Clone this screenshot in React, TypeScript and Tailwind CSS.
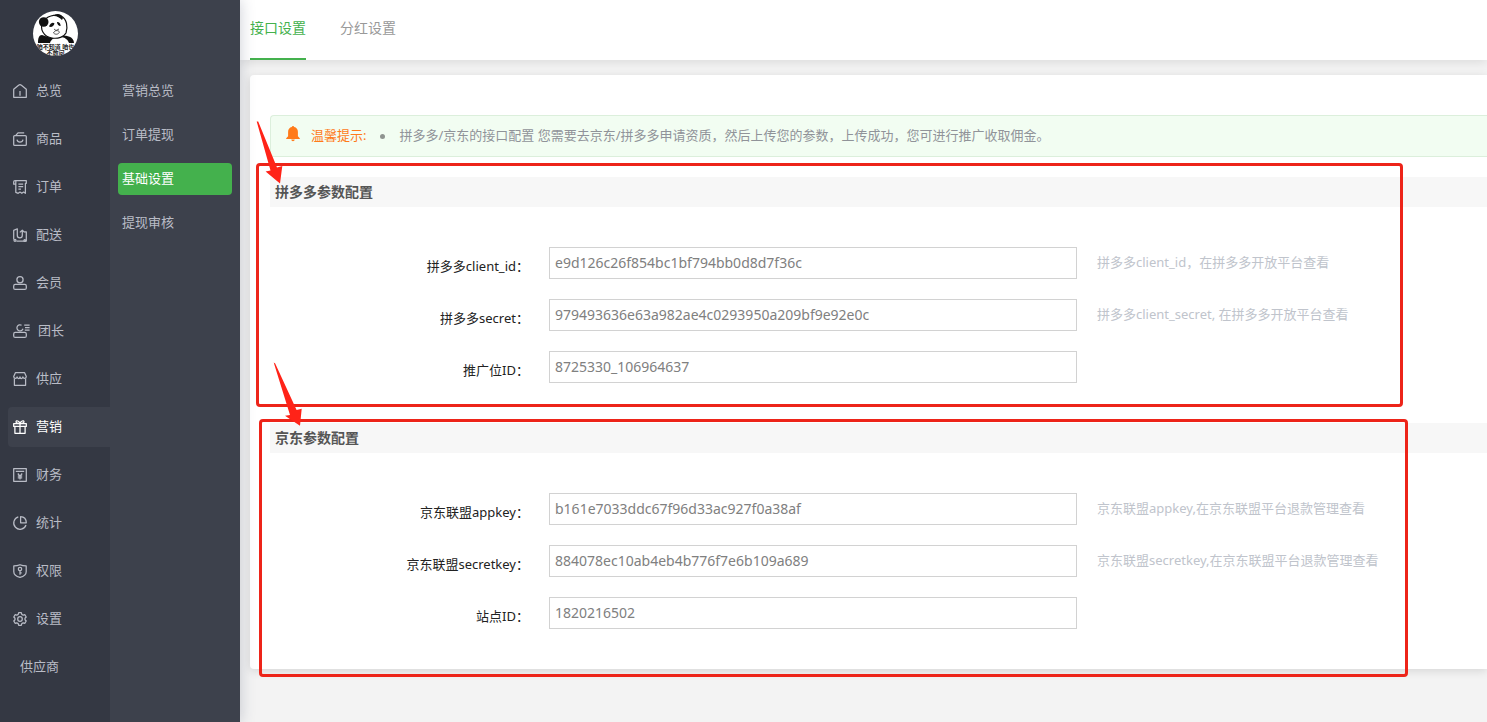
import { ReactNode, useState } from "react"
import clsx from "clsx"

const navIcons: Record<string, ReactNode> = {
  home: (
    <>
      <path d="M.7 5.2 5.6 1.2Q7 .1 8.4 1.2L13.3 5.2V13.3H.7Z" />
      <path d="M7 7v4.8" />
    </>
  ),
  goods: (
    <>
      <rect x=".7" y="3.6" width="12.6" height="9.8" rx="1" />
      <path d="M2.8 3.4 5 .8h6.2M4 7.6c.6 3.2 5.4 3.2 6 0" />
    </>
  ),
  order: (
    <>
      <path d="M3.2 4.2H.7V2Q.7.7 2 .7h11.3v2.6h-.9v10l-1.8-1.2-1.8 1.2-1.8-1.2-1.8 1.2-2.4-.9V2Q3.2.9 2.2.8" />
      <path d="M5.4 4.2h4.8M5.4 6.6h4.8M5.4 9h2.6" />
    </>
  ),
  delivery: (
    <>
      <path d="M.7 11.5V2.4L4.3.8v6.4c0 3.4 5 3.4 5 0V2.6M6.8 4.4l2.5-2.2 2.3 2.2M11.4 3.8h1.9v9.3H3.4" />
      <circle cx="2" cy="12.3" r="1" />
      <circle cx="11.8" cy="12.5" r=".9" />
    </>
  ),
  member: (
    <>
      <circle cx="7" cy="3.8" r="3.1" />
      <rect x=".7" y="8.4" width="12.6" height="5" rx="1.5" />
    </>
  ),
  leader: (
    <>
      <path d="M8.6 1.2A3.1 3.1 0 1 0 10 4.8M11.2 1h5.4M12 3.5h4.6M11.8 6h4.8" />
      <rect x=".7" y="8.4" width="12.6" height="5" rx="1.5" />
    </>
  ),
  shop: (
    <>
      <path d="M2.4.7h9.2l1.7 3.9c0 2.3-3 2.5-3.4.3-.5 2.2-2.6 2.2-2.9 0-.3 2.2-2.4 2.2-2.9 0C3.7 7.1.7 6.9.7 4.6Z" />
      <path d="M1.4 6.6v6.7h11.2V6.6" />
    </>
  ),
  gift: (
    <>
      <path d="M.7 3.6h12.6v2.8H.7ZM1.9 6.4v6.9h10.2V6.4M7 3.6v9.7" />
      <path d="M7 3.5C6.2 1 3.2-.1 3 1.7c0 1.2 2 1.9 4 1.8 2 .1 4-.6 4-1.8C10.8-.1 7.8 1 7 3.5Z" />
    </>
  ),
  finance: (
    <>
      <path d="M.7.7h12.6v12.6H.7ZM2.8 3.4h8.4" />
      <path d="m4.8 5.5 2.2 2.6 2.2-2.6M4.8 8.2h4.4M4.8 9.9h4.4M7 8.2v3.4" />
    </>
  ),
  stats: (
    <>
      <path d="M5.3.9A6.3 6.3 0 1 0 13 9" />
      <path d="M7.6.7v6.1h5.7C13.2 3 10.8.8 7.6.7Z" />
    </>
  ),
  shield: (
    <>
      <path d="M7 .7c2 .9 4.1 1.2 6.2 1.2v5.9c0 2.6-2.3 4.6-6.2 5.6C3.1 12.4.8 10.4.8 7.8V1.9C2.9 1.9 5 1.600 7 .7Z" />
      <circle cx="7" cy="5" r="1.7" />
      <path d="M7 6.7v4M7 8.9h1.7" />
    </>
  ),
  gear: (
    <>
      <path d="M5.7.7h2.6l.5 1.7 1.4.8 1.7-.5 1.3 2.3-1.2 1.2v1.6l1.2 1.2-1.3 2.3-1.7-.5-1.4.8-.5 1.7H5.7l-.5-1.7-1.4-.8-1.7.5L.8 9 2 7.8V6.2L.8 5l1.3-2.3 1.7.5 1.4-.8Z" />
      <circle cx="7" cy="7" r="2.3" />
    </>
  ),
}

const navItems = [
  { label: "总览", icon: "home" },
  { label: "商品", icon: "goods" },
  { label: "订单", icon: "order" },
  { label: "配送", icon: "delivery" },
  { label: "会员", icon: "member" },
  { label: "团长", icon: "leader" },
  { label: "供应", icon: "shop" },
  { label: "营销", icon: "gift" },
  { label: "财务", icon: "finance" },
  { label: "统计", icon: "stats" },
  { label: "权限", icon: "shield" },
  { label: "设置", icon: "gear" },
  { label: "供应商", icon: "" },
]

const subItems = ["营销总览", "订单提现", "基础设置", "提现审核"]
const tabs = ["接口设置", "分红设置"]

const pddFields = [
  { id: "pdd_client_id", label: "拼多多client_id：", value: "e9d126c26f854bc1bf794bb0d8d7f36c", hint: "拼多多client_id，在拼多多开放平台查看" },
  { id: "pdd_secret", label: "拼多多secret：", value: "979493636e63a982ae4c0293950a209bf9e92e0c", hint: "拼多多client_secret, 在拼多多开放平台查看" },
  { id: "pdd_pid", label: "推广位ID：", value: "8725330_106964637", hint: "" },
]

const jdFields = [
  { id: "jd_appkey", label: "京东联盟appkey：", value: "b161e7033ddc67f96d33ac927f0a38af", hint: "京东联盟appkey,在京东联盟平台退款管理查看" },
  { id: "jd_secretkey", label: "京东联盟secretkey：", value: "884078ec10ab4eb4b776f7e6b109a689", hint: "京东联盟secretkey,在京东联盟平台退款管理查看" },
  { id: "jd_site", label: "站点ID：", value: "1820216502", hint: "" },
]

function NavIcon({ name }: { name: string }) {
  const wide = name === "leader"
  return (
    <svg
      viewBox={wide ? "0 0 16 14" : "0 0 14 14"}
      className={clsx("h-3.5 shrink-0 overflow-visible", wide ? "w-4" : "w-3.5")}
      fill="none"
      stroke="currentColor"
      strokeWidth="1.25"
      strokeLinejoin="round"
      aria-hidden="true"
    >
      {navIcons[name]}
    </svg>
  )
}

function Avatar() {
  return (
    <svg viewBox="0 0 45 45" className="mx-auto size-[45px] rounded-full bg-white" role="img" aria-label="logo">
      <path d="M5 32c0-5 1-8 4-8 4 1 8 3 13 3s8-3 12-2c5 1 7 4 7 7Z" fill="#111" />
      <path d="M17 32c1-4 5-6 10-6s8 3 9 6Z" fill="#fff" />
      <path
        d="M10 11c3-6 12-8 18-6 6 3 7 11 5 17-2 4-8 6-14 5C11 26 6 18 10 11Z"
        fill="#fff"
        stroke="#111"
        strokeWidth="1.2"
      />
      <circle cx="10.7" cy="11" r="4.8" fill="#111" />
      <path d="M21 5c1-3 8-3 9 2l-1 2c-2-2-5-4-8-4Z" fill="#111" />
      <path d="M16 15.500c1-3 4-5 5.500-3-1 3-3 4-5.500 3ZM24 11c2-.5 4 2 3.500 4-2 0-3.500-2-3.500-4Z" fill="#111" />
      <path d="m21 18 2 1.500 3-1.500M20.500 22c1-3 5-3 6-1-1 2.500-4 3-6 1" fill="none" stroke="#333" strokeWidth=".8" />
      <text x="22.5" y="37.5" textAnchor="middle" fontSize="6" fontWeight="700" fill="#222">
        咱不知道 咱也
      </text>
      <text x="22.5" y="43.5" textAnchor="middle" fontSize="6" fontWeight="700" fill="#222">
        不敢问
      </text>
    </svg>
  )
}

type Field = { id: string; label: string; value: string; hint: string }

function ConfigSection({ title, fields, children }: { title: string; fields: Field[]; children: ReactNode }) {
  return (
    <section className="relative mt-5">
      <h2 className="h-[30px] bg-[#f7f7f7] pl-[5px] text-sm leading-[30px] font-bold text-[#555]">{title}</h2>
      <div className="flex flex-col gap-5 pt-10 pb-5">
        {fields.map((field) => (
          <div key={field.id} className="flex">
            <label htmlFor={field.id} className="w-[259px] shrink-0 pt-[9px] text-right text-[13px] leading-5 text-[#222]">
              {field.label}
            </label>
            <input
              id={field.id}
              type="text"
              defaultValue={field.value}
              className="mx-5 h-8 min-w-0 flex-1 border border-[#d2d2d2] bg-white px-[5px] pb-0.5 text-sm text-[#808080] outline-none"
            />
            <p className="w-[390px] shrink-0 pt-[5px] text-[13px] leading-5 text-[#c0c4cc]">{field.hint}</p>
          </div>
        ))}
      </div>
      {children}
    </section>
  )
}

export default function App() {
  const [tab, setTab] = useState("接口设置")

  return (
    <div className="flex min-h-screen bg-[#f3f3f3] font-['Noto_Sans','Noto_Sans_CJK_SC',sans-serif]">
      <div className="z-10 flex shrink-0 shadow-[0_0_14px_rgba(50,60,90,0.25)]">
        <aside className="w-[110px] bg-[#343843] pt-[11px]">
          <Avatar />
          <nav className="mt-[15px] flex flex-col gap-2 pl-2">
            {navItems.map((item) => (
              <a
                key={item.label}
                href="#"
                className={clsx(
                  "flex h-10 items-center gap-[9px] rounded-l text-[13px]",
                  item.icon ? "pl-[5px]" : "pl-3",
                  item.label === "营销" ? "bg-[#3d414c] text-white" : "text-[#b9bcc6]"
                )}
              >
                {item.icon && <NavIcon name={item.icon} />}
                {item.label}
              </a>
            ))}
          </nav>
        </aside>
        <nav className="flex w-[130px] flex-col gap-3 bg-[#3d414c] px-2 pt-[75px]">
          {subItems.map((label) => (
            <a
              key={label}
              href="#"
              className={clsx(
                "flex h-8 items-center rounded px-1 text-[13px]",
                label === "基础设置" ? "bg-[#44b14d] text-white" : "text-[#b9bcc6]"
              )}
            >
              {label}
            </a>
          ))}
        </nav>
      </div>

      <main className="min-w-0 flex-1 overflow-hidden">
        <header className="flex h-[60px] gap-[34px] bg-white pl-2.5 shadow-[0_2px_10px_rgba(0,0,0,0.1)]">
          {tabs.map((label) => (
            <button
              key={label}
              type="button"
              onClick={() => setTab(label)}
              className={clsx(
                "border-b-2 pb-0.5 text-sm",
                tab === label ? "border-[#44b14d] text-[#44b14d]" : "border-transparent text-[#999]"
              )}
            >
              {label}
            </button>
          ))}
        </header>

        <div className="mt-[15px] ml-2.5 rounded-l-sm bg-white pt-10 pb-5 pl-5 shadow-[0_2px_10px_rgba(0,0,0,0.12)]">
          <div className="flex h-[42px] items-center rounded-l border border-r-0 border-[#dcefdc] bg-[#f2fdf2] pl-[15px] text-[13px]">
            <svg viewBox="0 0 14 16" className="mb-1 h-4 w-3.5" fill="#ff7a1a" aria-hidden="true">
              <path d="M7 0c.7 0 1.1.4 1.2 1 2.3.5 3.7 2.3 3.7 4.7v4.6l1.9 1.9v.8H.2v-.8l1.9-1.900V5.7C2.1 3.3 3.5 1.5 5.8 1 5.9.4 6.3 0 7 0ZM5.3 13.6h3.4c-.1 1.1-.8 1.7-1.7 1.7s-1.6-.6-1.7-1.7Z" />
            </svg>
            <span className="ml-[11px] text-[#ff7a1a]">温馨提示:</span>
            <span className="mx-3.5 size-[5px] rounded-full bg-[#8f9490]" />
            <span className="text-[#909399]">
              拼多多/京东的接口配置 您需要去京东/拼多多申请资质，然后上传您的参数，上传成功，您可进行推广收取佣金。
            </span>
          </div>

          <form>
            <ConfigSection title="拼多多参数配置" fields={pddFields}>
              <div className="pointer-events-none absolute -top-3.5 right-[84px] -bottom-1 -left-3.5 rounded border-3 border-[#ed2419]" />
              <svg viewBox="0 0 28 64" className="pointer-events-none absolute -top-14 -left-3.5 h-16 w-7" fill="#ff2318">
                <path d="M.7.5 14.5 49.5 9.6 50.5 24 62.5 26.3 45 21 46.5 2.2.5Z" />
              </svg>
            </ConfigSection>
            <ConfigSection title="京东参数配置" fields={jdFields}>
              <div className="pointer-events-none absolute -top-1 right-[79px] -bottom-7 -left-[11px] rounded border-3 border-[#ed2419]" />
              <svg viewBox="0 0 32 64" className="pointer-events-none absolute -top-[61px] left-[3px] h-16 w-8" fill="#ff2318">
                <path d="M.7.5 17 53 12 53.7 27 63.800 28.7 46.7 23.6 48 2.2 1.5Z" />
              </svg>
            </ConfigSection>
          </form>
        </div>
      </main>
    </div>
  )
}
